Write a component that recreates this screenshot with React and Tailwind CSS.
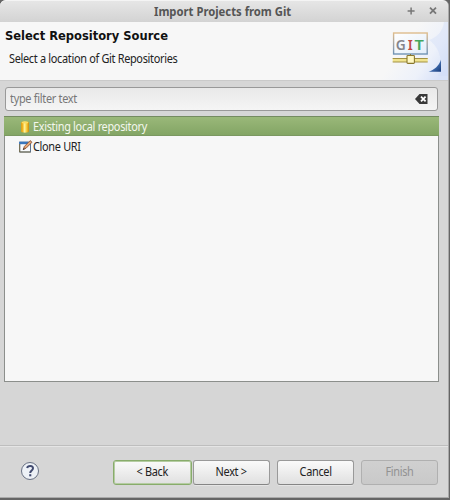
function TitleBar() {
  return (
    <div className="relative h-[22px] shrink-0 rounded-t-[6px] border-t border-[#f4f4f4] bg-linear-to-b from-[#e6e6e6] to-[#d3d3d3]">
      <h1 className="w-fit origin-left scale-x-[0.98] pt-px ml-[154px] text-[11.5px] leading-[19px] font-bold whitespace-nowrap text-[#555]">
        Import Projects from Git
      </h1>
      <svg className="absolute top-0 right-0 h-[21px] w-[48px]" viewBox="0 0 48 21" fill="none" stroke="#777" strokeWidth="1.5">
        <path d="M7.6 10h7M11.1 6.5v7" />
        <path d="M30 6.6l6 6M36 6.6l-6 6" strokeWidth="1.8" />
      </svg>
    </div>
  );
}

function GitBanner() {
  return (
    <svg className="h-[58px] w-[74px] shrink-0" viewBox="374 22 74 58">
      <defs>
        <linearGradient id="sky" x1="0" y1="0.2" x2="1" y2="0.75">
          <stop offset="0.4" stopColor="#f7f7f7" />
          <stop offset="0.75" stopColor="#edf1fa" />
          <stop offset="1" stopColor="#d8e2f8" />
        </linearGradient>
        <linearGradient id="frame" x1="0" y1="0" x2="0" y2="1">
          <stop offset="0" stopColor="#dfbd8d" />
          <stop offset="0.5" stopColor="#a5a6a5" />
          <stop offset="1" stopColor="#6f93b5" />
        </linearGradient>
        <linearGradient id="corner" x1="0" y1="0" x2="1" y2="1">
          <stop offset="0.35" stopColor="#a9c1e8" />
          <stop offset="0.6" stopColor="#3c67a8" />
          <stop offset="1" stopColor="#173b7a" />
        </linearGradient>
        <linearGradient id="screen" x1="0" y1="0" x2="1" y2="1">
          <stop offset="0" stopColor="#ffffff" />
          <stop offset="1" stopColor="#e3eefa" />
        </linearGradient>
      </defs>
      <rect x="374" y="22" width="74" height="58" fill="url(#sky)" />
      <path d="M448 22v54H438C444 62 440 48 429 40C438 37 443 30 444 22z" fill="#cfdcf7" opacity="0.4" />
      <rect x="393.6" y="33" width="33.6" height="21" fill="url(#screen)" stroke="url(#frame)" strokeWidth="1.4" />
      <g fontFamily="'Noto Sans', sans-serif" fontSize="15" fontWeight="600">
        <text x="395.8" y="49.5" fill="#85858b" textLength="10" lengthAdjust="spacingAndGlyphs">G</text>
        <text x="407.7" y="49.5" fill="#bf4646" textLength="5" lengthAdjust="spacingAndGlyphs">I</text>
        <text x="414.4" y="49.5" fill="#45a660" textLength="9.4" lengthAdjust="spacingAndGlyphs">T</text>
      </g>
      <path d="M410.5 54v2" stroke="#8b7b38" />
      <rect x="392.7" y="58" width="35" height="4" fill="#f0e38e" />
      <path d="M392.7 58.5h35M392.7 62h35" stroke="#a39244" />
      <rect x="407" y="55.5" width="7.4" height="7.9" rx="0.8" fill="#fff8c4" stroke="#89772e" strokeWidth="1.1" />
      <path d="M441 59.5v12.2h-12.5C434 70 439 66 441 59.5z" fill="url(#corner)" />
    </svg>
  );
}

function ClearIcon() {
  return (
    <svg className="h-[10px] w-[13px]" viewBox="0 0 13 10">
      <path d="M0 5L4.5 0H12.5V10H4.5z" fill="#393939" />
      <path d="M6 2.7l4.6 4.6M10.6 2.7L6 7.3" stroke="#fff" strokeWidth="1.8" />
    </svg>
  );
}

function RepositoryIcon() {
  return (
    <svg className="h-[12px] w-[14px]" viewBox="0 0 14 12">
      <defs>
        <linearGradient id="gold">
          <stop offset="0" stopColor="#d59b20" />
          <stop offset="0.2" stopColor="#f0b51e" />
          <stop offset="0.45" stopColor="#fff39c" />
          <stop offset="0.75" stopColor="#f4c52a" />
          <stop offset="1" stopColor="#c78614" />
        </linearGradient>
      </defs>
      <path d="M2 1.5C2 0 10 0 10 1.5v9C10 12 2 12 2 10.5z" fill="url(#gold)" />
      <ellipse cx="6" cy="1.6" rx="3.3" ry="1" fill="#fbdc62" />
    </svg>
  );
}

function CloneIcon() {
  return (
    <svg className="h-[13px] w-[14px]" viewBox="0 0 14 13">
      <rect x="0.7" y="2.2" width="10.8" height="9.8" fill="#f9fbfd" stroke="#5b7492" />
      <path d="M.2 1.7h9v2.5h-9z" fill="#3976bd" />
      <path d="M.7 4v8h10.8" stroke="#776c4b" fill="none" />
      <path d="M4.2 9.6l1.1-3.1L11.2.6l1.8 1.7-6 6z" fill="#df9460" stroke="#7e503c" strokeWidth="0.8" />
      <path d="M4 9.9l.7-2 1.2 1.1z" fill="#333" />
      <path d="M6.5 7L11 2.4" stroke="#fbd5a9" strokeWidth="0.7" />
    </svg>
  );
}

function HelpButton() {
  return (
    <button aria-label="Help" className="flex size-[18px] items-center justify-center rounded-full border-[1.3px] border-[#687184] bg-[#edf1f6]">
      <svg className="size-[16px]" viewBox="0 0 16 16">
        <path d="M5.1 5.1C5.9 2.2 11 2.3 11 5.3c0 2.2-2.8 2.2-2.8 4.7" fill="none" stroke="#424b70" strokeWidth="2" />
        <rect x="7.2" y="11.2" width="2.1" height="2.1" fill="#424b70" />
      </svg>
    </button>
  );
}

function Label({ children }) {
  return <span className="inline-block scale-x-[0.91] whitespace-nowrap">{children}</span>;
}

const button = "flex h-[25px] items-center justify-center rounded-[3px] border pb-[2px] text-[12px] leading-[20px] tracking-[-0.35px]";
const enabled = "border-[#999] border-b-[#858585] bg-linear-to-b from-[#fafafa] to-[#e0e0e0] text-[#222] shadow-[0_1px_0_#e5e5e5]";

export default function App() {
  return (
    <div className="h-[500px] w-[450px] overflow-hidden bg-[#656565] font-['Noto_Sans',sans-serif]">
      <main className="flex h-[498px] w-[449px] flex-col rounded-t-[6px] border-r border-b border-[#aaa] bg-[#d6d6d6]">
        <TitleBar />
        <header className="flex h-[58px] shrink-0 justify-between bg-[#f7f7f7]">
          <div className="pl-[5px]">
            <h2 className="pt-[6px] font-['DejaVu_Sans',sans-serif] text-[11.5px] leading-[16px] font-bold whitespace-nowrap text-[#111]">
              Select Repository Source
            </h2>
            <p className="mt-[7px] ml-[4px] w-fit origin-left scale-x-[0.91] text-[12px] leading-[16px] tracking-[-0.35px] whitespace-nowrap text-[#222]">Select a location of Git Repositories</p>
          </div>
          <GitBanner />
        </header>
        <section className="flex h-[365px] shrink-0 flex-col border-t border-[#cacaca] pt-[6px] pl-[4px]">
          <div className="ml-px flex h-[24px] w-[433px] items-center justify-between rounded-[3px] border border-[#999] bg-linear-to-b from-[#e9e9e9] to-[#f5f5f5] pr-[9px] pb-px pl-[4px]">
            <span className="origin-left scale-x-[0.91] text-[12px] leading-[20px] tracking-[-0.32px] text-[#777]">type filter text</span>
            <ClearIcon />
          </div>
          <div className="mt-[5px] h-[266px] w-[435px] border border-[#8c8f8c] bg-[#f7f7f7] text-[12px] leading-[18px] tracking-[-0.35px]">
            <div className="-mx-px -mt-px flex h-[20px] items-center border-y border-t-[#748b60] border-b-[#7b9861] bg-linear-to-b from-[#9ab879] to-[#83a565] pt-[2px] pl-[15px] text-[#f4f7ee]">
              <RepositoryIcon />
              <span className="origin-left scale-x-[0.91]">Existing local repository</span>
            </div>
            <div className="flex h-[19px] items-center pt-[2px] pl-[14px] text-[#222]">
              <CloneIcon />
              <span className="origin-left scale-x-[0.91]">Clone URI</span>
            </div>
          </div>
        </section>
        <footer className="flex h-[52px] grow items-start border-t border-[#bebebe] pt-[14px] pl-[21px] shadow-[inset_0_1px_0_#e5e5e5]">
          <div className="pt-[2px]"><HelpButton /></div>
          <button className={`${button} ml-[74px] w-[79px] border-[#88ac6b] bg-linear-to-b from-[#fafafa] to-[#e0e0e0] text-[#222] shadow-[inset_0_0_0_1px_#b5cca2]`}><Label>&lt; Back</Label></button>
          <button className={`${button} ${enabled} ml-px w-[77px]`}><Label>Next &gt;</Label></button>
          <button className={`${button} ${enabled} ml-[7px] w-[77px]`}><Label>Cancel</Label></button>
          <button disabled className={`${button} ml-[7px] w-[77px] border-[#b0b0b0] bg-linear-to-b from-[#d0d0d0] to-[#c9c9c9] text-[#929292]`}><Label>Finish</Label></button>
        </footer>
      </main>
    </div>
  );
}
